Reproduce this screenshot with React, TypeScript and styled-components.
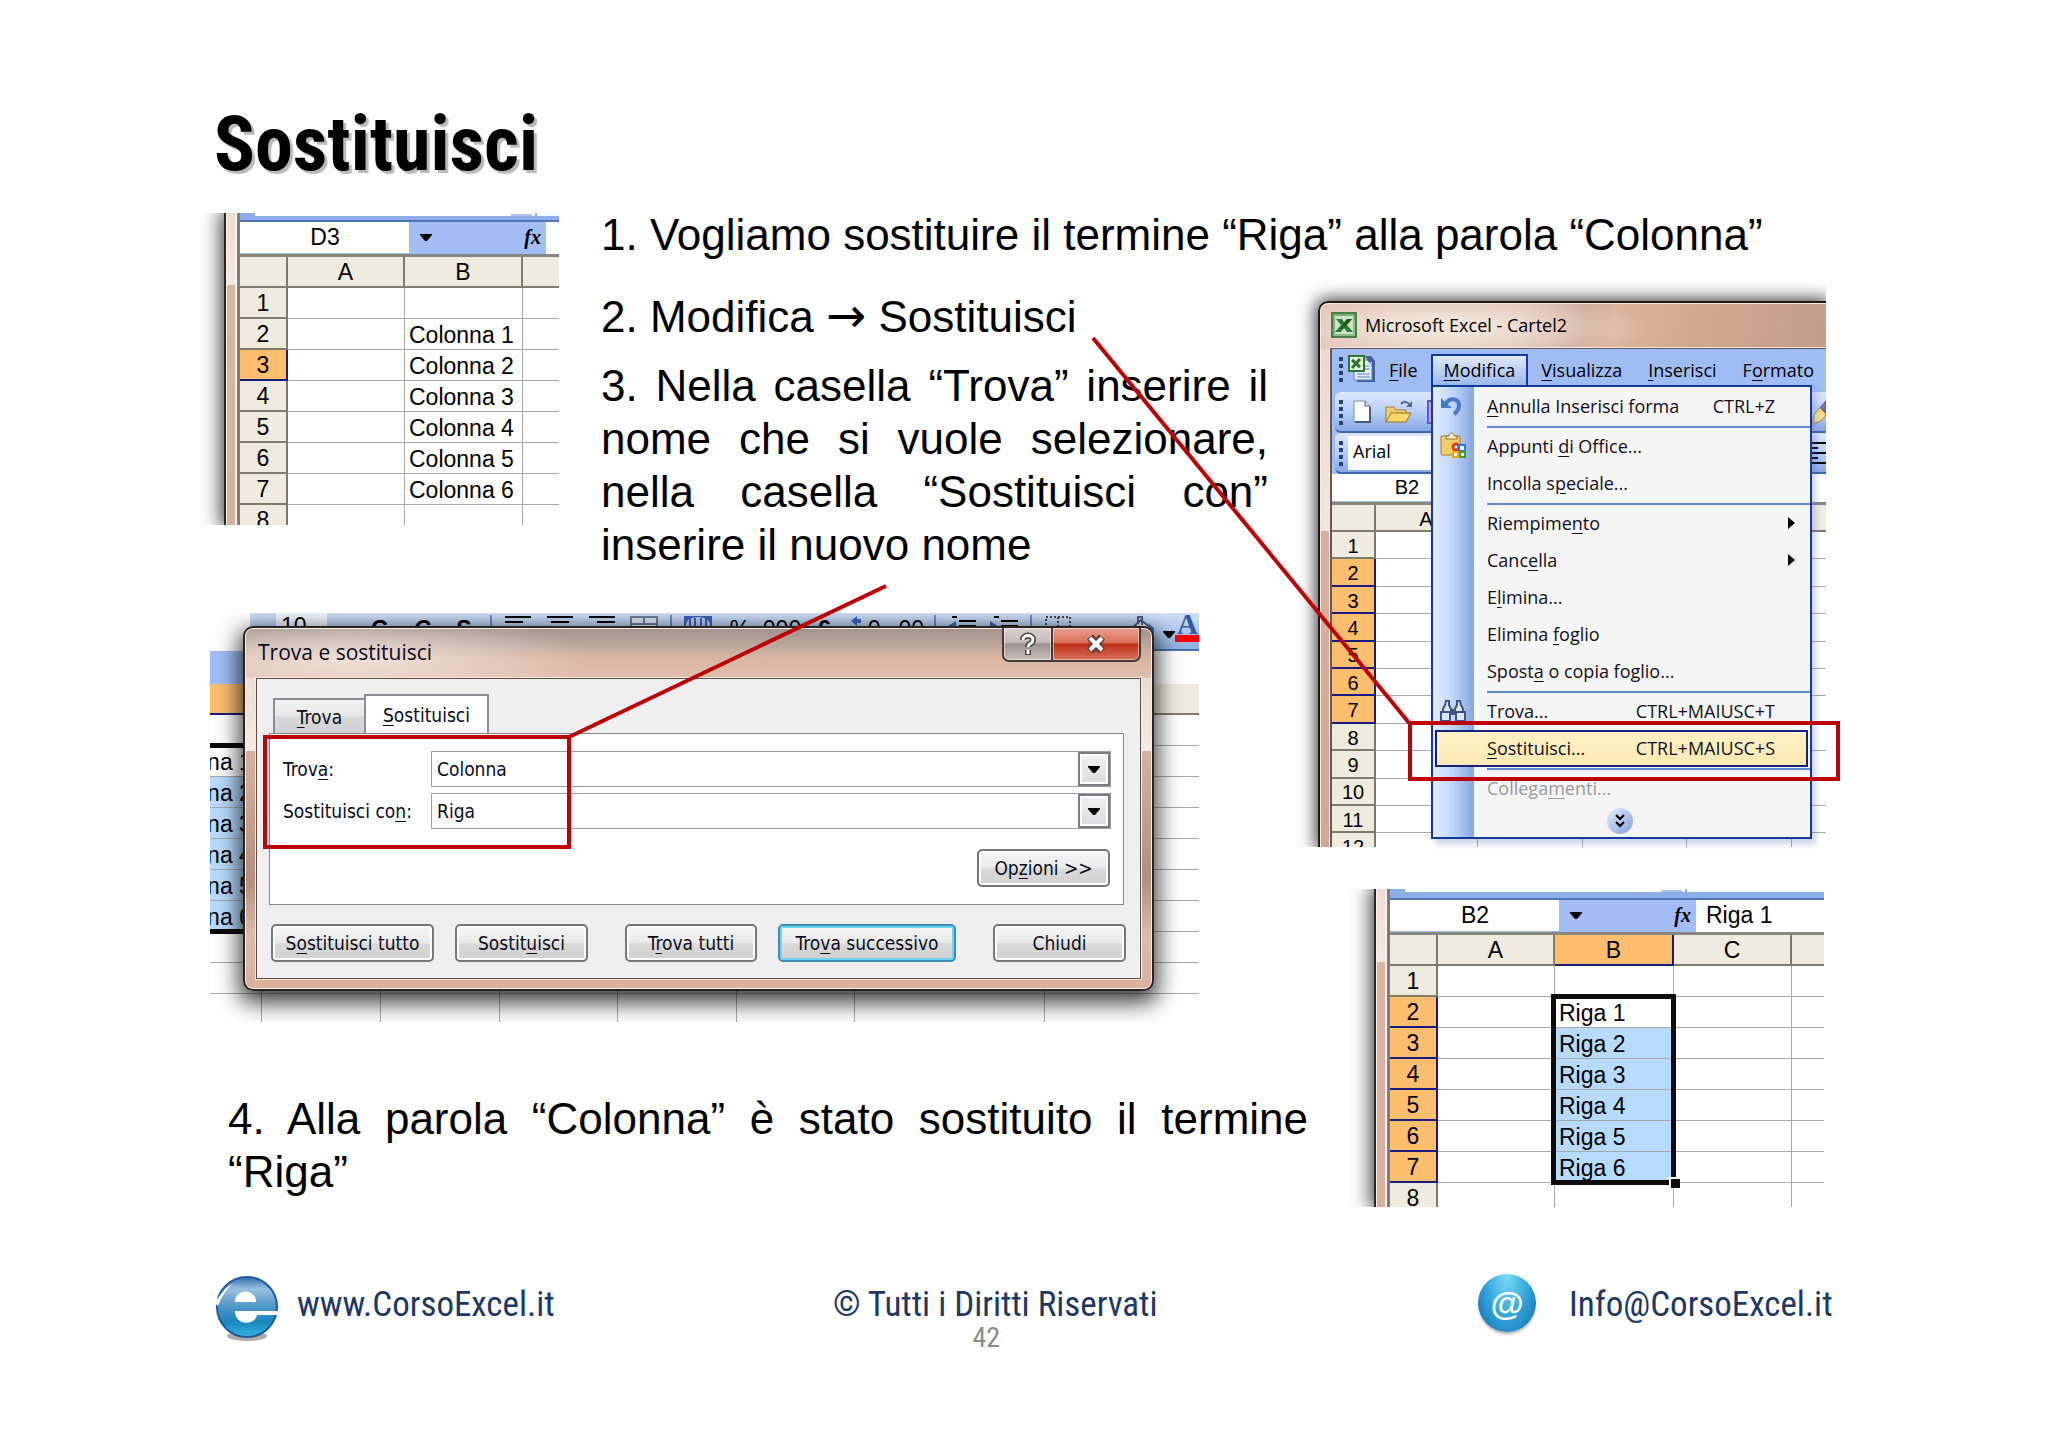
import React from "react";
import styled, { createGlobalStyle, css } from "styled-components";

const ARIAL = `"Liberation Sans", Arial, sans-serif`;
const SEGOE = `"Open Sans", "Segoe UI", sans-serif`;
const TAHOMA = `"DejaVu Sans Condensed", Tahoma, sans-serif`;
const DISPLAY = `"Roboto Condensed", "Liberation Sans Narrow", Lato, sans-serif`;
const RED = "#bd0004";

const GlobalStyle = createGlobalStyle`
  *, *::before, *::after { box-sizing: border-box; }
  body { margin: 0; background: #fefefe; color: #000; font-family: ${ARIAL}; }
  h1, p, figure { margin: 0; }
  button, input { font: inherit; color: inherit; }
  u { text-underline-offset: 3px; }
`;

/* ---------- slide ---------- */

const Slide = styled.main`
  padding: 102px 222px 0 210px;
`;

const Title = styled.h1`
  height: 106px;
  padding-left: 4px;
  font: 700 76px/84px ${DISPLAY};
  text-shadow: 3px 3px 1px #b9b9b9;
`;

const Content = styled.div`
  display: grid;
  grid-template-columns: 391px minmax(0, 1fr) 508px;
  grid-template-rows: auto auto auto 1fr;
`;

const Step = styled.p`
  font-size: 44px;
  line-height: 53px;
`;

const Arrow = styled.span`
  font-family: "DejaVu Sans", sans-serif;
  font-size: 48px;
  line-height: 1;
`;

const FirstStep = styled(Step)`
  grid-column: 2 / 4;
  grid-row: 1;
  white-space: nowrap;
`;

const MiddleSteps = styled.div`
  grid-column: 2;
  grid-row: 2;
  display: flex;
  flex-direction: column;
  gap: 16px;
  padding: 29px 50px 0 0;
`;

const JustifiedStep = styled(Step)`
  text-align: justify;
`;

const LastStep = styled(JustifiedStep)`
  grid-column: 1 / 3;
  grid-row: 4;
  padding: 70px 10px 0 18px;
`;

const RightColumn = styled.div`
  grid-column: 3;
  grid-row: 2 / 5;
  display: flex;
  flex-direction: column;
  gap: 42px;
  padding-top: 40px;
`;

const StartSheet = styled.div`
  grid-column: 1;
  grid-row: 1 / 3;
  padding: 5px 42px 0 14px;
`;

const ResultSheet = styled.div`
  padding: 0 2px 0 56px;
`;

const DialogArea = styled.div`
  grid-column: 1 / 3;
  grid-row: 3;
  padding: 42px 119px 0 0;
`;

/* ---------- call-outs ---------- */

const Callout = styled.div<{ $x: number; $y: number; $w: number; $h: number }>`
  position: absolute;
  z-index: 3;
  left: ${(p) => p.$x}px;
  top: ${(p) => p.$y}px;
  width: ${(p) => p.$w}px;
  height: ${(p) => p.$h}px;
  border: 4px solid ${RED};
  pointer-events: none;
`;

const Connector = styled.svg<{ $x: number; $y: number }>`
  position: absolute;
  z-index: 3;
  left: ${(p) => p.$x}px;
  top: ${(p) => p.$y}px;
  overflow: visible;
  pointer-events: none;
  stroke: ${RED};
  stroke-width: 4;
`;

/* ---------- spreadsheet ---------- */

const SheetFigure = styled.figure<{ $h: number }>`
  display: flex;
  height: ${(p) => p.$h}px;
  background: #fff;
  box-shadow: 0 0 18px 3px rgba(0, 0, 0, 0.75);
  clip-path: inset(0 0 0 -24px);
`;

const GlassEdge = styled.div`
  flex: none;
  width: 16px;
  border-left: 2px solid #2b2320;
  border-right: 3px solid #857a74;
  background: linear-gradient(#efdcd3, #f3e9e4 23%, #dab3a1 23%, #d9b19f);
  box-shadow: inset 1px 0 #fbf3ee, inset -2px 0 #fbf3ee;
`;

const SheetBody = styled.div`
  flex: 1;
  min-width: 0;
  overflow: hidden;
  font-size: 23px;
`;

const ToolStrip = styled.div<{ $h: number }>`
  display: flex;
  height: ${(p) => p.$h}px;
  padding-left: 15px;
  background: #8eaee9;
  border-bottom: 2px solid #4f74b8;
`;

const ToolStripBox = styled.div`
  width: 256px;
  height: 3px;
  background: #fff;
`;

const ToolStripMark = styled.div`
  width: 24px;
  height: 3px;
  margin-right: 2px;
  border-top: 1px solid #fff;
  border-right: 3px solid #fff;
  background: #a9c3f2;
`;

const ToolStripRest = styled.div`
  flex: 1;
  height: 3px;
  background: #f4f8ff;
`;

const NameBar = styled.div<{ $h: number; $box: number }>`
  display: grid;
  grid-template-columns: ${(p) => p.$box}px 137px 1fr;
  height: ${(p) => p.$h}px;
  background: #a3bef6;
  border-bottom: 3px solid #87877f;
`;

const NameBox = styled.div<{ $flush?: boolean }>`
  margin-bottom: 1px;
  padding-left: ${(p) => (p.$flush ? 0 : 1)}px;
  background: #fff;
  text-align: center;
  line-height: ${(p) => (p.$flush ? 26 : 30)}px;
`;

const NameTools = styled.div`
  display: flex;
  align-items: center;
  justify-content: space-between;
  padding: 0 5px 2px 11px;
  font: italic 700 20px/28px "Liberation Serif", serif;
`;

const FormulaBox = styled.div`
  padding-left: 10px;
  background: #fff;
  line-height: 30px;
  white-space: nowrap;
  overflow: hidden;
`;

const Grid = styled.table<{ $row: number; $w: number; $size: number; $total?: number }>`
  width: ${(p) => p.$w}px;
  height: ${(p) => (p.$total ? `${p.$total}px` : "auto")};
  table-layout: fixed;
  border-collapse: separate;
  border-spacing: 0;
  font-size: ${(p) => p.$size}px;
  background: #fff;
  tr { height: ${(p) => p.$row}px; }
`;

const Head = styled.th<{ $on?: boolean; $w?: number }>`
  width: ${(p) => (p.$w ? `${p.$w}px` : "auto")};
  padding: 2px 0 0;
  font-weight: 400;
  line-height: 1;
  text-align: center;
  background: ${(p) => (p.$on ? "#fdbf6e" : "#efecdf")};
  border-right: 2px solid ${(p) => (p.$on ? "#1a1a80" : "#7f7c6c")};
  border-bottom: 2px solid ${(p) => (p.$on ? "#1a1a80" : "#7f7c6c")};
`;

const Cell = styled.td<{ $fill?: boolean }>`
  position: relative;
  padding: 2px 0 0 4px;
  line-height: 1;
  white-space: nowrap;
  background: ${(p) => (p.$fill ? "#b7dbff" : "#fff")};
  border-right: 1px solid #a9a9a9;
  border-bottom: 1px solid #a9a9a9;
`;

const Selection = styled.div<{ $h: number }>`
  position: absolute;
  z-index: 1;
  left: -4px;
  top: -3px;
  right: -3px;
  height: ${(p) => p.$h}px;
  border: 5px solid #0c0c0c;
  &::after {
    content: "";
    position: absolute;
    right: -9px;
    bottom: -8px;
    width: 11px;
    height: 11px;
    background: #0c0c0c;
    border: solid #fff;
    border-width: 2px 0 0 2px;
  }
`;

type Column = { name: string; w: number; on?: boolean };
type SheetTableProps = {
  corner: number;
  columns: Column[];
  rows: number;
  rowHeight: number;
  size: number;
  total?: number;
  active?: number[];
  values?: string[];
  selected?: boolean;
};

function SheetTable({ corner, columns, rows, rowHeight, size, total, active = [], values = [], selected }: SheetTableProps) {
  const width = corner + columns.reduce((sum, c) => sum + c.w, 0);
  return (
    <Grid $row={rowHeight} $w={width} $size={size} $total={total}>
      <thead>
        <tr>
          {corner > 0 && <Head $w={corner} aria-label="Seleziona tutto" />}
          {columns.map((c, i) => (
            <Head key={i} $w={c.w} $on={c.on} scope="col">{c.name}</Head>
          ))}
        </tr>
      </thead>
      <tbody>
        {Array.from({ length: rows }, (_, i) => i + 1).map((n) => (
          <tr key={n}>
            {corner > 0 && <Head $on={active.includes(n)} scope="row">{n}</Head>}
            {columns.map((c, i) => {
              const isB = c.name === "B";
              return (
                <Cell key={i} $fill={isB && selected && n > 2 && n < 8}>
                  {isB ? values[n - 2] : null}
                  {isB && selected && n === 2 && <Selection $h={rowHeight * 6 + 5} />}
                </Cell>
              );
            })}
          </tr>
        ))}
      </tbody>
    </Grid>
  );
}

const DownArrow = () => (
  <svg width="12" height="7" viewBox="0 0 12 7" aria-hidden="true">
    <path d="M0 0h12v1L7 7H5L0 1z" fill="#000" />
  </svg>
);

function Sheet(props: { height: number; strip: number; name: string; formula?: string } & SheetTableProps) {
  const { height, strip, name, formula, ...table } = props;
  return (
    <SheetFigure $h={height}>
      <GlassEdge />
      <SheetBody>
        <ToolStrip $h={strip}>
          <ToolStripBox />
          <ToolStripMark />
          <ToolStripRest />
        </ToolStrip>
        <NameBar $h={35} $box={169}>
          <NameBox>{name}</NameBox>
          <NameTools><DownArrow /><span>fx</span></NameTools>
          <FormulaBox>{formula}</FormulaBox>
        </NameBar>
        <SheetTable {...table} />
      </SheetBody>
    </SheetFigure>
  );
}

/* ---------- Excel window with its open menu ---------- */

const WindowFigure = styled.figure`
  position: relative;
`;

const WindowClip = styled.div`
  clip-path: inset(-22px 0 0 -22px);
`;

const WindowFrame = styled.div`
  display: flex;
  flex-direction: column;
  height: 546px;
  padding-left: 10px;
  overflow: hidden;
  border: solid #1e1917;
  border-width: 2px 0 0 2px;
  border-top-left-radius: 10px;
  background:
    radial-gradient(ellipse 210px 40px at 120px 24px, #f3e4da 20%, transparent 100%),
    linear-gradient(100deg, #dcb9a6 0 40%, #c9a593 52%, #ddb39b 58%, #cfa48d 80%, #c39e8b) 0 0 / 100% 46px no-repeat,
    linear-gradient(#ead3c7, #f3e6df 42%, #d8b09e 42%, #d3a893);
  box-shadow: 0 0 16px 3px rgba(0, 0, 0, 0.7), inset 1px 1px #f9ece4;
`;

const WindowTitle = styled.div`
  display: flex;
  flex: none;
  align-items: center;
  gap: 8px;
  height: 45px;
  padding: 0 0 2px 1px;
  font: 18px/24px ${SEGOE};
`;

const WindowBody = styled.div`
  flex: 1;
  min-height: 0;
  overflow: hidden;
  border: solid #625a5a;
  border-width: 1px 0 0 2px;
  background: #a0bcf5;
  box-shadow: 0 0 0 1px #f6e8e0;
`;

const MenuBar = styled.nav`
  display: flex;
  align-items: flex-start;
  height: 43px;
  padding: 5px 0 0 7px;
  font: 18px/24px ${SEGOE};
`;

const MenuBarItem = styled.button<{ $open?: boolean }>`
  height: 34px;
  padding: 0 12px 2px;
  border: 1px solid transparent;
  background: none;
  ${(p) =>
    p.$open &&
    css`
      border: 2px solid #123a9c;
      border-bottom: 0;
      padding: 0 11px 4px;
      width: 101px;
      background: linear-gradient(#dfe9fb, #93b3ec);
    `}
`;

const Grip = styled.span`
  flex: none;
  width: 4px;
  height: 26px;
  margin-top: 3px;
  background: repeating-linear-gradient(#27407c 0 4px, transparent 4px 7px);
`;

const BookIcon = styled.span`
  display: flex;
  padding: 1px 0 0 5px;
  height: 32px;
`;

const Toolbar = styled.div`
  display: flex;
  align-items: center;
  height: 41px;
  margin-left: 3px;
  padding-left: 4px;
  border-radius: 6px 0 0 6px;
  border-bottom: 2px solid #3d64ad;
  background: linear-gradient(#dbe7fc, #b9cff7 50%, #86a8e4);
`;

const ToolbarIcons = styled.div`
  display: flex;
  align-items: center;
  gap: 14px;
  padding-left: 10px;
`;

const ToolbarEnd = styled.div`
  display: flex;
  margin-left: auto;
`;

const FontBox = styled.input`
  width: 120px;
  height: 34px;
  margin-left: 5px;
  padding: 0 5px 3px;
  border: 0;
  background: #fff;
  font: 18px/24px ${SEGOE};
`;

const SmallNameBar = styled(NameBar)`
  font-size: 20px;
`;

const Menu = styled.div`
  position: absolute;
  left: 113px;
  top: 84px;
  width: 381px;
  padding: 1px 0 2px;
  border: 2px solid #123a9c;
  font: 18px/24px ${SEGOE};
  background:
    linear-gradient(90deg, #e2edfe, #c3d9fb 45%, #86a6e0) 0 0 / 41px 100% no-repeat,
    #f6f5f6;
  box-shadow: 4px 5px 6px rgba(90, 110, 190, 0.3);
`;

const MenuItem = styled.button<{ $active?: boolean; $off?: boolean; $sub?: boolean }>`
  display: grid;
  grid-template-columns: 54px 1fr auto;
  align-items: center;
  width: 100%;
  height: 37px;
  padding: 0 ${(p) => (p.$sub ? 15 : 35)}px 2px 0;
  border: 0;
  background: none;
  text-align: left;
  color: ${(p) => (p.$off ? "#9a9a9a" : "#10101c")};
  ${(p) =>
    p.$active &&
    css`
      width: 373px;
      margin-left: 2px;
      padding-right: 31px;
      grid-template-columns: 50px 1fr auto;
      border: 2px solid #14227e;
      background: linear-gradient(#fff1c6, #fee9b4);
    `}
`;

const MenuIcon = styled.span`
  display: flex;
  padding-left: 7px;
`;

const MenuRule = styled.hr`
  height: 3px;
  margin: 0 0 0 54px;
  border: 0;
  background: linear-gradient(transparent 1px, #6088cc 1px);
`;

const MoreRow = styled.div`
  display: flex;
  justify-content: center;
  padding: 1px 4px 1px 0;
`;

const MoreButton = styled.button`
  width: 26px;
  height: 26px;
  padding: 0;
  border: 0;
  border-radius: 50%;
  background: linear-gradient(135deg, #e6effd, #7fa0df);
  line-height: 0;
`;

const ExcelLogo = ({ size }: { size: number }) => (
  <svg width={size} height={size} viewBox="0 0 26 26" aria-hidden="true">
    <rect x="1" y="1" width="24" height="24" fill="#dcebd6" stroke="#4a7d47" strokeWidth="2" />
    <rect x="3" y="3" width="20" height="20" fill="#cfe3c8" stroke="#7fae7a" strokeWidth="2" />
    <path d="M5 7h6l2 3 3-3h5l-5 6 6 7h-6l-3-4-3 4H4l6-7z" fill="#2d7a35" />
    <path d="M16 7h5l-9 10H9z" fill="#175c22" />
    <path d="M3 23h20V8" fill="none" stroke="#8fbf86" strokeWidth="2" />
  </svg>
);

const WorkbookIcon = () => (
  <svg width="28" height="28" viewBox="0 0 28 28" aria-hidden="true">
    <path d="M17 1h6l4 5v21H9v-3h15V7h-3z" fill="#3f5f9c" />
    <path d="M6 5h13l5 5v15H6z" fill="#e4edfc" stroke="#5b7fb8" />
    <path d="M17 11h5M17 14h5M9 19h13M9 22h13" stroke="#5f80bb" />
    <rect x="1" y="1" width="15" height="15" fill="#e6f3df" stroke="#2f7433" strokeWidth="2" />
    <path d="M4 5l8 7M12 4l-8 9" stroke="#2f7433" strokeWidth="3" />
  </svg>
);

const PageIcon = () => (
  <svg width="18" height="23" viewBox="0 0 18 23" aria-hidden="true">
    <path d="M1 1h11l5 5v16H1z" fill="#fbfcff" stroke="#7c8aa8" />
    <path d="M12 1v5h5" fill="#cfd9ee" stroke="#4c5a7a" />
    <path d="M17 7v15H2" fill="none" stroke="#4c5a7a" strokeWidth="2" />
  </svg>
);

const FolderIcon = () => (
  <svg width="28" height="24" viewBox="0 0 28 24" aria-hidden="true">
    <path d="M1 22V7h8l2 3h10v4" fill="#f0cf74" stroke="#a77d27" />
    <path d="M1 22l5-9h20l-5 9z" fill="#fbd66b" stroke="#96701f" />
    <path d="M16 4c3-3 6-3 9 1" fill="none" stroke="#50688f" strokeWidth="2" />
    <path d="M21 7h6V1z" fill="#50688f" />
  </svg>
);

const DiskIcon = () => (
  <svg width="20" height="24" viewBox="0 0 20 24" aria-hidden="true">
    <rect x="1" y="1" width="20" height="22" fill="#b9a7ee" stroke="#6a58c0" strokeWidth="2" />
  </svg>
);

const BrushIcon = () => (
  <svg width="15" height="26" viewBox="0 0 15 26" aria-hidden="true">
    <path d="M15 2L9 9l6 5z" fill="#7f73c0" stroke="#4a4190" />
    <path d="M9 9l6 6c-3 6-7 9-13 9 0-7 2-11 7-15z" fill="#f6dc8b" stroke="#a78a3a" />
  </svg>
);

const AlignIcon = ({ mode = "left" }: { mode?: "left" | "center" | "right" }) => {
  const x = mode === "left" ? 0 : mode === "center" ? 4 : 8;
  return (
    <svg width="26" height="22" viewBox="0 0 26 22" aria-hidden="true">
      <path d={`M0 1h26M${x} 6h18M0 11h26M${x} 16h18M0 21h26`} stroke="#000" strokeWidth="2" />
    </svg>
  );
};

const UndoIcon = () => (
  <svg width="22" height="22" viewBox="0 0 22 22" aria-hidden="true">
    <path d="M6 8c5-6 13-4 13 2 0 4-2 7-5 9" fill="none" stroke="#4a79c9" strokeWidth="4" />
    <path d="M1 3v10h11z" fill="#4a79c9" />
  </svg>
);

const ClipboardIcon = () => (
  <svg width="26" height="27" viewBox="0 0 26 27" aria-hidden="true">
    <rect x="1" y="4" width="19" height="19" rx="1" fill="#f3cd6a" stroke="#a87a22" />
    <path d="M6 7V4h3c0-4 5-4 5 0h3v3z" fill="#f8eecb" stroke="#8c7434" />
    <circle cx="16" cy="15" r="3" fill="#fff" stroke="#e23b1c" strokeWidth="3" />
    <rect x="19" y="13" width="6" height="6" fill="#fff" stroke="#2f74d8" strokeWidth="2" />
    <rect x="13" y="20" width="5" height="5" fill="#fff" stroke="#f1a912" strokeWidth="2" />
    <rect x="20" y="20" width="5" height="5" fill="#fff" stroke="#3ba32c" strokeWidth="2" />
  </svg>
);

const BinocularsIcon = () => (
  <svg width="26" height="22" viewBox="0 0 26 22" aria-hidden="true">
    <g fill="#dbe6f8" stroke="#3b5684" strokeWidth="2">
      <path d="M6 1h3v4l2 4v3H3V9l2-4zM17 1h3l1 4 2 4v3h-8V9l2-4z" />
      <rect x="1" y="12" width="9" height="9" />
      <rect x="16" y="12" width="9" height="9" />
      <path d="M11 10h4v4h-4z" fill="#3b5684" />
    </g>
  </svg>
);

type Entry = { label: React.ReactNode; keys?: string; icon?: React.ReactNode; sub?: boolean; active?: boolean; off?: boolean; rule?: boolean };

const editMenu: Entry[] = [
  { label: <><u>A</u>nnulla Inserisci forma</>, keys: "CTRL+Z", icon: <UndoIcon />, rule: true },
  { label: <>Appunti <u>d</u>i Office...</>, icon: <ClipboardIcon /> },
  { label: <>Incolla s<u>p</u>eciale...</>, rule: true },
  { label: <>Riempime<u>n</u>to</>, sub: true },
  { label: <>Canc<u>e</u>lla</>, sub: true },
  { label: <>E<u>l</u>imina...</> },
  { label: <>Elimina <u>f</u>oglio</> },
  { label: <>Spost<u>a</u> o copia foglio...</>, rule: true },
  { label: <><u>T</u>rova...</>, keys: "CTRL+MAIUSC+T", icon: <BinocularsIcon /> },
  { label: <><u>S</u>ostituisci...</>, keys: "CTRL+MAIUSC+S", active: true, rule: true },
  { label: <>Collega<u>m</u>enti...</>, off: true },
];

function ExcelWindow() {
  return (
    <WindowFigure>
      <WindowClip>
        <WindowFrame>
          <WindowTitle><ExcelLogo size={26} />Microsoft Excel - Cartel2</WindowTitle>
          <WindowBody>
            <MenuBar>
              <Grip />
              <BookIcon><WorkbookIcon /></BookIcon>
              <MenuBarItem><u>F</u>ile</MenuBarItem>
              <MenuBarItem $open><u>M</u>odifica</MenuBarItem>
              <MenuBarItem><u>V</u>isualizza</MenuBarItem>
              <MenuBarItem><u>I</u>nserisci</MenuBarItem>
              <MenuBarItem>F<u>o</u>rmato</MenuBarItem>
            </MenuBar>
            <Toolbar>
              <Grip />
              <ToolbarIcons><PageIcon /><FolderIcon /><DiskIcon /></ToolbarIcons>
              <ToolbarEnd><BrushIcon /></ToolbarEnd>
            </Toolbar>
            <Toolbar>
              <Grip />
              <FontBox aria-label="Tipo di carattere" defaultValue="Arial" />
              <ToolbarEnd><AlignIcon /></ToolbarEnd>
            </Toolbar>
            <SmallNameBar $h={31} $box={150}>
              <NameBox $flush>B2</NameBox>
              <NameTools />
              <FormulaBox />
            </SmallNameBar>
            <SheetTable
              corner={44}
              columns={[{ name: "A", w: 102 }, { name: "", w: 105 }, { name: "", w: 104 }, { name: "", w: 105 }, { name: "", w: 104 }]}
              rows={12}
              rowHeight={27}
              size={20}
              total={356}
              active={[2, 3, 4, 5, 6, 7]}
            />
          </WindowBody>
        </WindowFrame>
      </WindowClip>
      <Menu>
        {editMenu.map((e, i) => (
          <React.Fragment key={i}>
            <MenuItem $active={e.active} $off={e.off} $sub={e.sub} disabled={e.off}>
              <MenuIcon>{e.icon}</MenuIcon>
              <span>{e.label}</span>
              {e.sub ? (
                <svg width="7" height="12" aria-hidden="true"><path d="M0 0v12l7-6z" /></svg>
              ) : (
                <span>{e.keys}</span>
              )}
            </MenuItem>
            {e.rule && <MenuRule />}
          </React.Fragment>
        ))}
        <MoreRow>
          <MoreButton aria-label="Altri comandi">
            <svg width="10" height="14" viewBox="0 0 10 14" aria-hidden="true">
              <path d="M1 1l4 4 4-4M1 8l4 4 4-4" fill="none" stroke="#000" strokeWidth="2" />
            </svg>
          </MoreButton>
        </MoreRow>
      </Menu>
      <Connector $x={-225} $y={37} width="317" height="386" aria-hidden="true">
        <line x1="0" y1="0" x2="317" y2="386" />
      </Connector>
      <Callout $x={90} $y={420} $w={432} $h={60} />
    </WindowFigure>
  );
}

/* ---------- find and replace dialog ---------- */

const DialogFigure = styled.figure`
  position: relative;
`;

const DialogBackdrop = styled.div`
  position: relative;
  height: 409px;
  overflow: hidden;
`;

const BackToolbar = styled.div`
  display: flex;
  align-items: flex-start;
  height: 38px;
  margin-left: 40px;
  padding: 0 0 0 26px;
  border-bottom: 2px solid #4a70b4;
  background: linear-gradient(#cfe0f8, #8fb0e2);
  font-size: 23px;
  line-height: 26px;
`;

const SizeBox = styled.div`
  width: 62px;
  height: 30px;
  margin-right: 32px;
  padding-left: 5px;
  background: #f2f6fd;
`;

const Tool = styled.span`
  display: flex;
  flex: none;
  justify-content: center;
  width: 42px;
  padding-top: 3px;
`;

const ToolRule = styled.span`
  flex: none;
  width: 2px;
  height: 24px;
  margin: 2px 5px 0;
  background: #6a8cc8;
`;

const BackBar = styled.div`
  height: 33px;
  width: 60px;
  background: #a0bdf5;
`;

const BackSheet = styled.div`
  margin-left: -67px;
`;

const Dialog = styled.form`
  position: absolute;
  z-index: 2;
  left: 33px;
  right: 45px;
  top: 13px;
  padding: 0 11px 10px;
  border: 2px solid #2b2320;
  border-radius: 10px;
  font: 19px/24px ${TAHOMA};
  color: #0c0c1c;
  background:
    radial-gradient(ellipse 240px 46px at 110px 30px, rgba(250, 242, 238, 0.7), transparent),
    linear-gradient(#a2918c, #bda69c 35%, #d9b6a2 60%, #e0bfac) 0 0 / 100% 50px no-repeat,
    linear-gradient(#e6cfc3, #f5ebe5 34%, #d9b29f 34%, #b58d7c 70%, #e0bba8 85%, #dab09a);
  box-shadow: inset 0 0 0 1px #fbeee6, 0 8px 22px 4px rgba(0, 0, 0, 0.75);
`;

const DialogTitle = styled.div`
  display: flex;
  justify-content: space-between;
  height: 50px;
  padding-left: 2px;
  font: 21px/49px ${SEGOE};
`;

const WindowButtons = styled.div`
  display: flex;
  height: 34px;
`;

const WindowButton = styled.button<{ $close?: boolean }>`
  width: ${(p) => (p.$close ? 88 : 51)}px;
  padding: 0;
  border: 2px solid #463a38;
  border-top: 0;
  border-left-width: ${(p) => (p.$close ? 0 : 2)}px;
  border-radius: ${(p) => (p.$close ? "0 0 7px 0" : "0 0 0 7px")};
  background: ${(p) =>
    p.$close
      ? "linear-gradient(#e9a08f, #d9705a 45%, #bd3218 50%, #d8705a)"
      : "linear-gradient(#d9d0cd, #c5bab7 45%, #9c918f 50%, #cbbfbb)"};
  box-shadow: inset 0 0 0 1px rgba(255, 255, 255, 0.5);
  line-height: 0;
`;

const Client = styled.div`
  padding: 15px 16px 16px 12px;
  border: 1px solid #5d4d47;
  outline: 1px solid #f8e8de;
  background: #f0efef;
`;

const Tabs = styled.div`
  display: flex;
  align-items: flex-end;
  padding-left: 4px;
`;

const Tab = styled.button<{ $on?: boolean }>`
  width: ${(p) => (p.$on ? 125 : 91)}px;
  height: ${(p) => (p.$on ? 39 : 35)}px;
  padding: 0;
  border: 2px solid #8c8c92;
  border-bottom: 0;
  border-right-width: ${(p) => (p.$on ? 2 : 0)}px;
  background: ${(p) => (p.$on ? "#fff" : "linear-gradient(#f3f3f3, #e8e8e8 48%, #d8d8da 52%, #d0d0d2)")};
`;

const Pane = styled.div`
  padding: 17px 12px;
  border: 1px solid #85858c;
  background: #fff;
`;

const Fields = styled.div`
  display: grid;
  grid-template-columns: 148px 1fr;
  align-items: center;
  gap: 6px 0;
  padding-left: 1px;
`;

const Combo = styled.div`
  display: flex;
  height: 36px;
  border: 1px solid #9c9ca2;
  background: #fff;
`;

const ComboInput = styled.input`
  flex: 1;
  min-width: 0;
  padding: 0 5px;
  border: 0;
  background: none;
`;

const ComboButton = styled.button`
  width: 32px;
  padding: 0;
  border: 2px solid #7b7b82;
  background: linear-gradient(#f1f1f1, #dcdcde);
  box-shadow: inset 0 0 0 2px #fff;
  line-height: 0;
`;

const PaneFoot = styled.div`
  display: flex;
  justify-content: flex-end;
  padding: 20px 1px 0 0;
`;

const PushButton = styled.button<{ $w: number; $focus?: boolean }>`
  width: ${(p) => p.$w}px;
  height: 38px;
  padding: 0;
  border: 2px solid ${(p) => (p.$focus ? "#3d8fb5" : "#77777b")};
  border-radius: 5px;
  background: linear-gradient(#f4f4f4, #ebebeb 48%, #dadadb 52%, #d0d0d1);
  box-shadow: inset 0 0 0 2px ${(p) => (p.$focus ? "#6fd3f3" : "#fbfbfb")};
`;

const ButtonRow = styled.div`
  display: flex;
  justify-content: space-between;
  margin-right: -2px;
  padding: 19px 0 0 2px;
`;

const ButtonGroup = styled.div`
  display: flex;
  gap: 21px;
`;

const Glyph = styled.b<{ $italic?: boolean; $line?: boolean }>`
  font-style: ${(p) => (p.$italic ? "italic" : "normal")};
  text-decoration: ${(p) => (p.$line ? "underline" : "none")};
  font-weight: 700;
`;

const FontColor = styled.span`
  flex: none;
  margin-left: 12px;
  width: 24px;
  height: 29px;
  padding-left: 2px;
  border-bottom: 7px solid #f00;
  color: #3557a5;
  font: 700 29px/22px "Liberation Serif", serif;
`;

const ToolMarker = styled.span`
  align-self: flex-start;
  width: 12px;
  margin: 4px -12px 0 0;
`;

const MergeIcon = () => (
  <svg width="28" height="26" viewBox="0 0 28 26" aria-hidden="true">
    <path d="M1 1h26v24H1zM1 8h26M14 1v7" fill="#dfe6f2" stroke="#6d7d9b" strokeWidth="2" />
    <path d="M9 11h8v5" fill="none" stroke="#222" strokeWidth="2" />
  </svg>
);

const CurrencyIcon = () => (
  <svg width="28" height="26" viewBox="0 0 28 26" aria-hidden="true">
    <rect width="28" height="26" fill="#3c61b4" />
    <ellipse cx="14" cy="9" rx="12" ry="8" fill="#b9cdf2" />
    <path d="M6 3v12M11 2v14M17 2v14M22 3v12" stroke="#3c61b4" strokeWidth="2" />
  </svg>
);

const LeftArrow = () => (
  <svg width="10" height="10" viewBox="0 0 10 10" aria-hidden="true">
    <path d="M6 0L0 5l6 5V7h4V3H6z" fill="#3a66c0" />
  </svg>
);

const IndentIcon = ({ out }: { out?: boolean }) => (
  <svg width="28" height="22" viewBox="0 0 28 22" aria-hidden="true">
    <path d="M4 1h5M11 5h17M11 10h17M4 15h24" stroke="#000" strokeWidth="2" />
    <path d={out ? "M8 5v10L0 10z" : "M0 5v10l8-5z"} fill="#3a66c0" />
  </svg>
);

const BorderIcon = () => (
  <svg width="26" height="22" viewBox="0 0 26 22" aria-hidden="true">
    <path d="M1 1h24v20H1zM13 1v20M1 11h24" fill="none" stroke="#444" strokeWidth="2" strokeDasharray="2 2" />
  </svg>
);

const BucketIcon = () => (
  <svg width="26" height="24" viewBox="0 0 26 24" aria-hidden="true">
    <path d="M3 12L12 4l10 8-9 9z" fill="#e6ecf7" stroke="#4c5b78" strokeWidth="2" />
    <path d="M9 8V1h4v8" fill="none" stroke="#4c5b78" strokeWidth="2" />
    <path d="M19 7l6 5v7z" fill="#3a66c0" />
  </svg>
);

const sheetNames = ["Colonna 1", "Colonna 2", "Colonna 3", "Colonna 4", "Colonna 5", "Colonna 6"];
const rigaNames = ["Riga 1", "Riga 2", "Riga 3", "Riga 4", "Riga 5", "Riga 6"];

function FindReplace() {
  return (
    <DialogFigure>
      <DialogBackdrop>
        <BackToolbar>
          <SizeBox>10</SizeBox>
          <Tool><Glyph>G</Glyph></Tool>
          <Tool><Glyph $italic>C</Glyph></Tool>
          <Tool><Glyph $line>S</Glyph></Tool>
          <ToolRule />
          <Tool><AlignIcon /></Tool>
          <Tool><AlignIcon mode="center" /></Tool>
          <Tool><AlignIcon mode="right" /></Tool>
          <Tool><MergeIcon /></Tool>
          <ToolRule />
          <Tool><CurrencyIcon /></Tool>
          <Tool>%</Tool>
          <Tool>000</Tool>
          <Tool><Glyph>€</Glyph></Tool>
          <Tool><LeftArrow />,0</Tool>
          <Tool>,00</Tool>
          <ToolRule />
          <Tool><IndentIcon out /></Tool>
          <Tool><IndentIcon /></Tool>
          <ToolRule />
          <Tool><BorderIcon /></Tool>
          <Tool />
          <Tool><BucketIcon /></Tool>
          <ToolMarker><DownArrow /></ToolMarker>
          <FontColor>A</FontColor>
        </BackToolbar>
        <BackBar />
        <BackSheet>
          <SheetTable
            corner={0}
            columns={[
              { name: "B", w: 119, on: true },
              { name: "", w: 119 },
              { name: "", w: 119 },
              { name: "", w: 118 },
              { name: "", w: 119 },
              { name: "", w: 118 },
              { name: "", w: 190 },
              { name: "", w: 190 },
            ]}
            rows={10}
            rowHeight={31}
            size={23}
            values={sheetNames}
            selected
          />
        </BackSheet>
        <Dialog onSubmit={(e) => e.preventDefault()}>
          <DialogTitle>
            Trova e sostituisci
            <WindowButtons>
              <WindowButton type="button" aria-label="Guida">
                <svg width="18" height="24" viewBox="0 0 18 24" aria-hidden="true">
                  <path d="M4 8c0-6 10-6 10 0 0 4-5 3-5 7M9 18v5" fill="none" stroke="#4a4444" strokeWidth="6" />
                  <path d="M4 8c0-6 10-6 10 0 0 4-5 3-5 7M9 18v4" fill="none" stroke="#fff" strokeWidth="3" />
                </svg>
              </WindowButton>
              <WindowButton type="button" $close aria-label="Chiudi finestra">
                <svg width="20" height="18" viewBox="0 0 20 18" aria-hidden="true">
                  <path d="M4 2l12 14M16 2L4 16" stroke="#5d3a38" strokeWidth="8" />
                  <path d="M4 3l12 12M16 3L4 15" stroke="#fff" strokeWidth="4" />
                </svg>
              </WindowButton>
            </WindowButtons>
          </DialogTitle>
          <Client>
            <Tabs role="tablist">
              <Tab type="button" role="tab"><u>T</u>rova</Tab>
              <Tab type="button" role="tab" aria-selected $on><u>S</u>ostituisci</Tab>
            </Tabs>
            <Pane>
              <Fields>
                <label htmlFor="find">Trov<u>a</u>:</label>
                <Combo>
                  <ComboInput id="find" defaultValue="Colonna" />
                  <ComboButton type="button" aria-label="Ricerche recenti"><DownArrow /></ComboButton>
                </Combo>
                <label htmlFor="replace">Sostituisci co<u>n</u>:</label>
                <Combo>
                  <ComboInput id="replace" defaultValue="Riga" />
                  <ComboButton type="button" aria-label="Sostituzioni recenti"><DownArrow /></ComboButton>
                </Combo>
              </Fields>
              <PaneFoot>
                <PushButton type="button" $w={133}>Op<u>z</u>ioni &gt;&gt;</PushButton>
              </PaneFoot>
            </Pane>
            <ButtonRow>
              <ButtonGroup>
                <PushButton type="button" $w={163}>S<u>o</u>stituisci tutto</PushButton>
                <PushButton type="button" $w={133}>Sostit<u>u</u>isci</PushButton>
              </ButtonGroup>
              <ButtonGroup>
                <PushButton type="button" $w={132}>T<u>r</u>ova tutti</PushButton>
                <PushButton type="submit" $w={178} $focus>Tro<u>v</u>a successivo</PushButton>
              </ButtonGroup>
              <PushButton type="button" $w={133}>Chiudi</PushButton>
            </ButtonRow>
          </Client>
        </Dialog>
      </DialogBackdrop>
      <Connector $x={359} $y={-27} width="317" height="151" aria-hidden="true">
        <line x1="0" y1="151" x2="317" y2="0" />
      </Connector>
      <Callout $x={53} $y={122} $w={308} $h={114} />
    </DialogFigure>
  );
}

/* ---------- footer ---------- */

const Footer = styled.footer`
  display: grid;
  grid-template-columns: minmax(0, 618fr) minmax(0, 645fr) minmax(0, 348fr);
  padding: 67px 0 0 5px;
  font: 35px/40px ${DISPLAY};
  color: #1f3763;
`;

const FooterPart = styled.div<{ $gap: number }>`
  display: flex;
  align-items: flex-start;
  gap: ${(p) => p.$gap}px;
`;

const FooterLink = styled.a`
  margin-top: 11px;
  color: inherit;
  text-decoration: none;
  white-space: nowrap;
`;

const Copyright = styled.div`
  justify-self: start;
  margin-top: 11px;
  text-align: center;
`;

const PageNumber = styled.p`
  padding-right: 18px;
  font-size: 28px;
  line-height: 26px;
  color: #8c8c8c;
`;

const AtSign = styled.span`
  display: grid;
  flex: none;
  place-items: center;
  width: 58px;
  height: 58px;
  border-radius: 50%;
  background: radial-gradient(ellipse at 50% 0, #7fdcf5, #35a9dc 50%, #0f67ad);
  box-shadow: 0 3px 3px -1px rgba(0, 0, 0, 0.35);
  color: #fff;
  font: 700 34px/34px ${ARIAL};
`;

const BrowserIcon = () => (
  <svg width="64" height="68" viewBox="0 0 64 68" aria-hidden="true">
    <defs>
      <linearGradient id="ball" x1="0" y1="0" x2="0" y2="1">
        <stop offset="0" stopColor="#2b6fae" />
        <stop offset="0.2" stopColor="#9bbfe0" />
        <stop offset="0.5" stopColor="#4d96c6" />
        <stop offset="0.75" stopColor="#1787bd" />
        <stop offset="1" stopColor="#3db4e0" />
      </linearGradient>
    </defs>
    <ellipse cx="32" cy="62" rx="20" ry="5" fill="#777" opacity="0.6" />
    <circle cx="32" cy="33" r="30" fill="url(#ball)" stroke="#1c5c9c" strokeWidth="2" />
    <path d="M20 28c0-14 21-14 21 0z" fill="#fff" />
    <path d="M64 37H20c0 15 20 15 22 4h22z" fill="#fff" />
    <path d="M0 29C4 22 10 14 17 10 10 17 6 24 3 32z" fill="#fff" />
  </svg>
);

export default function App() {
  return (
    <>
      <GlobalStyle />
      <Slide>
        <Title>Sostituisci</Title>
        <Content>
          <StartSheet>
            <Sheet
              height={312}
              strip={9}
              name="D3"
              corner={48}
              columns={[{ name: "A", w: 117 }, { name: "B", w: 118 }, { name: "", w: 119 }]}
              rows={8}
              rowHeight={31}
              size={23}
              active={[3]}
              values={sheetNames}
            />
          </StartSheet>
          <FirstStep>1. Vogliamo sostituire il termine “Riga” alla parola “Colonna”</FirstStep>
          <MiddleSteps>
            <Step>2. Modifica <Arrow>→</Arrow> Sostituisci</Step>
            <JustifiedStep>
              3. Nella casella “Trova” inserire il nome che si vuole selezionare, nella casella “Sostituisci con” inserire il nuovo nome
            </JustifiedStep>
          </MiddleSteps>
          <DialogArea><FindReplace /></DialogArea>
          <LastStep>4. Alla parola “Colonna” è stato sostituito il termine “Riga”</LastStep>
          <RightColumn>
            <ExcelWindow />
            <ResultSheet>
              <Sheet
                height={318}
                strip={11}
                name="B2"
                formula="Riga 1"
                corner={48}
                columns={[{ name: "A", w: 117 }, { name: "B", w: 119, on: true }, { name: "C", w: 118 }, { name: "", w: 119 }]}
                rows={8}
                rowHeight={31}
                size={23}
                active={[2, 3, 4, 5, 6, 7]}
                values={rigaNames}
                selected
              />
            </ResultSheet>
          </RightColumn>
        </Content>
        <Footer>
          <FooterPart $gap={18}>
            <BrowserIcon />
            <FooterLink href="#sito">www.CorsoExcel.it</FooterLink>
          </FooterPart>
          <Copyright>
            © Tutti i Diritti Riservati
            <PageNumber>42</PageNumber>
          </Copyright>
          <FooterPart $gap={33}>
            <AtSign>@</AtSign>
            <FooterLink href="#posta">Info@CorsoExcel.it</FooterLink>
          </FooterPart>
        </Footer>
      </Slide>
    </>
  );
}
